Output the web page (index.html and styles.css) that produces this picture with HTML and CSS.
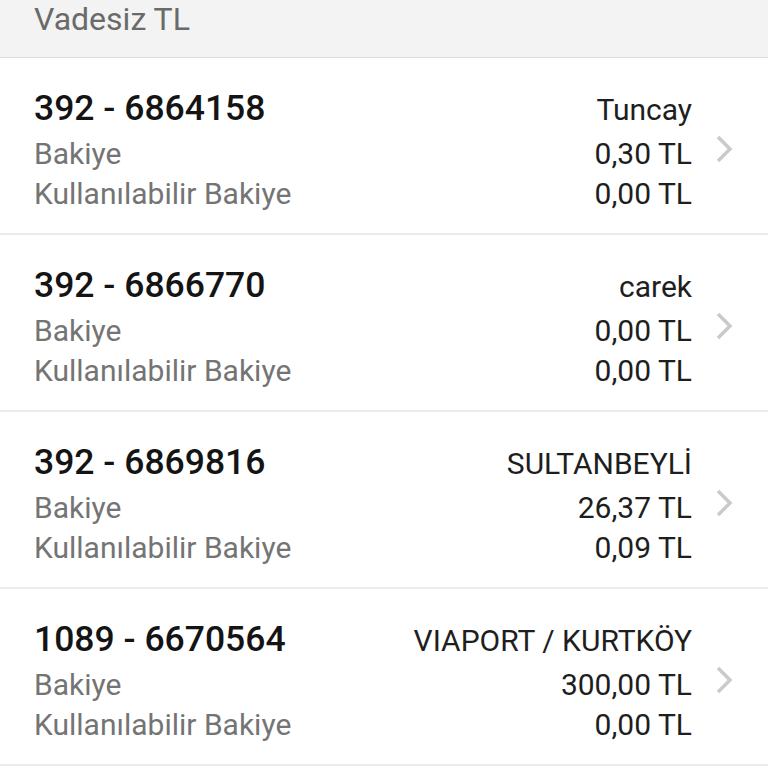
FILE: index.html
```html
<!DOCTYPE html>
<html lang="tr">
<head>
<meta charset="utf-8">
<title>Vadesiz TL</title>
<link rel="stylesheet" href="styles.css">
</head>
<body>
<div class="screen">
  <div class="section-header">Vadesiz TL</div>
  <ul class="accounts">
    <li class="account">
      <div class="acc-no">392 - 6864158</div>
      <div class="acc-name">Tuncay</div>
      <div class="label">Bakiye</div>
      <div class="value">0,30 TL</div>
      <div class="label">Kullanılabilir Bakiye</div>
      <div class="value">0,00 TL</div>
      <svg class="chev" width="18" height="28" viewBox="0 0 18 28"><polyline points="3,2 15,14 3,26"/></svg>
    </li>
    <li class="account">
      <div class="acc-no">392 - 6866770</div>
      <div class="acc-name">carek</div>
      <div class="label">Bakiye</div>
      <div class="value">0,00 TL</div>
      <div class="label">Kullanılabilir Bakiye</div>
      <div class="value">0,00 TL</div>
      <svg class="chev" width="18" height="28" viewBox="0 0 18 28"><polyline points="3,2 15,14 3,26"/></svg>
    </li>
    <li class="account">
      <div class="acc-no">392 - 6869816</div>
      <div class="acc-name">SULTANBEYLİ</div>
      <div class="label">Bakiye</div>
      <div class="value">26,37 TL</div>
      <div class="label">Kullanılabilir Bakiye</div>
      <div class="value">0,09 TL</div>
      <svg class="chev" width="18" height="28" viewBox="0 0 18 28"><polyline points="3,2 15,14 3,26"/></svg>
    </li>
    <li class="account">
      <div class="acc-no">1089 - 6670564</div>
      <div class="acc-name">VIAPORT / KURTKÖY</div>
      <div class="label">Bakiye</div>
      <div class="value">300,00 TL</div>
      <div class="label">Kullanılabilir Bakiye</div>
      <div class="value">0,00 TL</div>
      <svg class="chev" width="18" height="28" viewBox="0 0 18 28"><polyline points="3,2 15,14 3,26"/></svg>
    </li>
  </ul>
</div>
</body>
</html>
```

FILE: styles.css
```css
html, body {
  margin: 0;
  padding: 0;
  background: #ffffff;
}
body {
  font-family: Roboto, "Noto Sans", "Liberation Sans", sans-serif;
  width: 768px;
  height: 768px;
  overflow: hidden;
}
.screen {
  display: flex;
  flex-direction: column;
}
.section-header {
  height: 58px;
  box-sizing: border-box;
  padding: 1px 0 0 34px;
  background: #f3f3f3;
  border-bottom: 1px solid #dddddd;
  color: #6a6a6a;
  font-size: 32px;
  line-height: 36px;
}
.accounts {
  list-style: none;
  margin: 0;
  padding: 0;
}
.account {
  display: grid;
  grid-template-columns: 1fr auto 18px;
  grid-template-rows: 52px 40px 40px;
  column-gap: 23px;
  align-items: baseline;
  padding: 24px 35px 19px 34px;
  border-bottom: 2px solid #ebebeb;
}
.acc-no {
  font-size: 35.5px;
  line-height: 52px;
  font-weight: 500;
  color: #141414;
  grid-column: 1;
}
.acc-name, .value {
  grid-column: 2;
  text-align: right;
  font-size: 30px;
  color: #1e1e1e;
}
.acc-name { line-height: 52px; }
.value { line-height: 40px; }
.label {
  grid-column: 1;
  font-size: 30px;
  line-height: 40px;
  color: #747474;
}
.chev {
  grid-column: 3;
  grid-row: 1 / 4;
  align-self: center;
  margin-top: 2px;
}
.chev polyline {
  fill: none;
  stroke: #cacaca;
  stroke-width: 3.5;
}
```
